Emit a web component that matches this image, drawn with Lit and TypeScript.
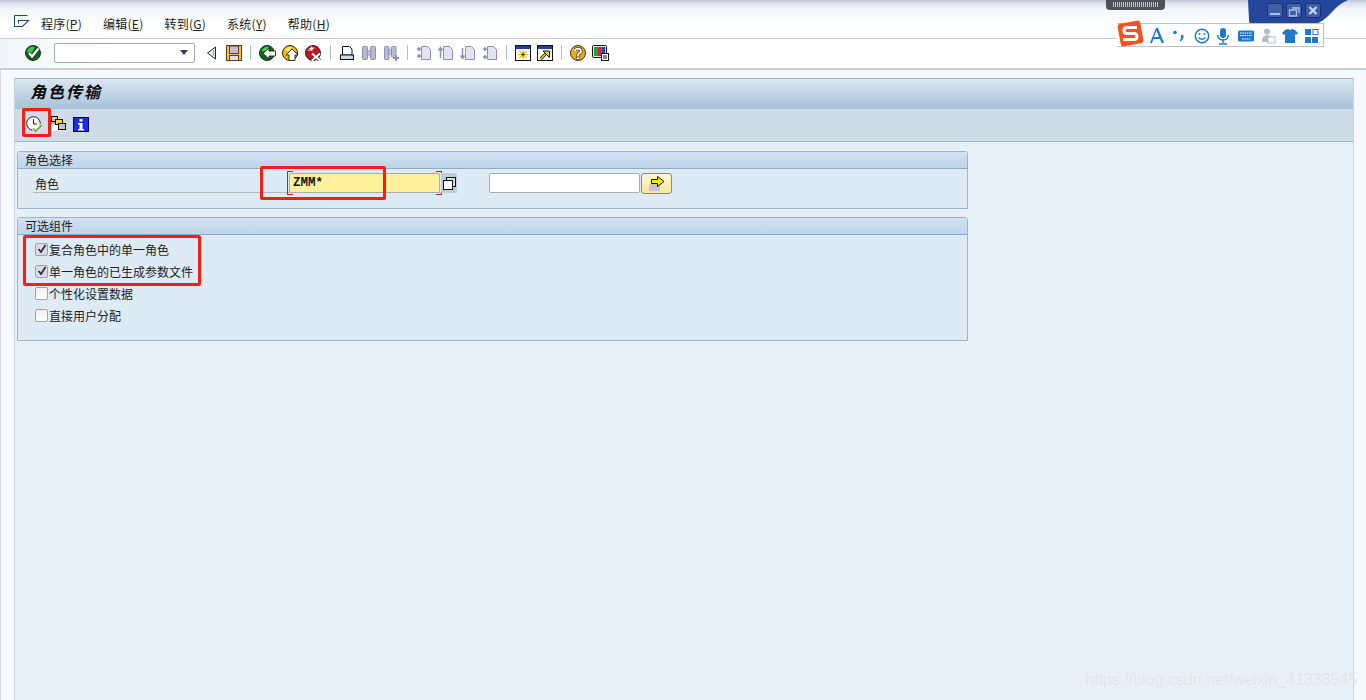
import { LitElement, html, css, svg } from "lit";
import { customElement } from "lit/decorators.js";

const ic = (w: number, h: number, body: unknown) =>
  html`<svg class="ic" width=${w} height=${h} viewBox="0 0 ${w} ${h}">${body}</svg>`;

const okIcon = ic(16, 16, svg`<circle cx="8" cy="8" r="7.5" fill="#0f5f20"/><path d="M2 7a6 6 0 0 1 8-5l-3 6z" fill="#3fc63f"/><circle cx="8" cy="8" r="7.5" fill="none" stroke="#143322"/><path d="M4 8l3 3.500 6.500-8" fill="none" stroke="#333" stroke-width="3.600"/><path d="M4 8l3 3.500 6.500-8" fill="none" stroke="#fff" stroke-width="2.200"/>`);
const backTri = ic(11, 14, svg`<path d="M9.500 1L1.500 7l8 6z" fill="#eef1f4" stroke="#222"/><path d="M7.500 4v6" stroke="#9aa3ad"/>`);
const save = ic(16, 16, svg`<rect x=".5" y=".5" width="15" height="15" fill="#f7c14a" stroke="#5a3c10"/><rect x="3.500" y="1" width="9" height="7.500" fill="#cbb8dc" stroke="#5a3c10"/><rect x="3.500" y="10.500" width="9" height="5" fill="#e6d9ee" stroke="#5a3c10"/>`);
const circArrow = (bg: string, hi: string, arrow: unknown) => ic(17, 16, svg`<circle cx="8" cy="8" r="7.500" fill=${bg} stroke="#222"/><path d="M2.500 6a6 6 0 0 1 7-4l-2 4z" fill=${hi}/>${arrow}`);
const back = circArrow("#0c6a1e", "#4fd04f", svg`<path d="M4 8.500L10 3v3h6.500v5H10v3z" fill="#fff" stroke="#222" stroke-width=".9"/>`);
const up = circArrow("#f5b800", "#fff06a", svg`<path d="M10 4l6 6h-3v5.500H7V10H4z" fill="#fff" stroke="#222" stroke-width=".9"/>`);
const cancel = circArrow("#c4141c", "#ff7a7a", svg`<path d="M7 8.500l8 7M15 8.500l-8 7" stroke="#444" stroke-width="3.600"/><path d="M7 8.500l8 7M15 8.500l-8 7" stroke="#fff" stroke-width="2"/><path d="M4.500 3.500h4M6.500 1.500v4" stroke="#fff" stroke-width="1.200"/>`);
const print = ic(16, 16, svg`<path d="M3.500 1.500h7l2.500 2.500v6h-9.500z" fill="#fff" stroke="#111"/><rect x="1.500" y="10" width="13" height="4.500" fill="#d5d8ec" stroke="#111"/>`);
const G = "#8f8fb5";
const find = ic(16, 16, svg`<rect x="1.500" y="1.500" width="5" height="13" rx="1" fill="#b9b9d2" stroke=${G}/><rect x="9.500" y="1.500" width="5" height="13" rx="1" fill="#b9b9d2" stroke=${G}/><rect x="6" y="6" width="4" height="4" fill="#c9c9dc" stroke=${G}/>`);
const findNext = ic(16, 16, svg`<rect x="1.500" y="1.500" width="4.500" height="13" rx="1" fill="#b9b9d2" stroke=${G}/><rect x="8.500" y="1.500" width="4.500" height="11" rx="1" fill="#b9b9d2" stroke=${G}/><rect x="5.500" y="5" width="3" height="4" fill="#c9c9dc" stroke=${G}/><path d="M13 10v6M10 13h6" stroke=${G} stroke-width="2"/>`);
const pg = (extra: unknown) => ic(16, 16, svg`<path d="M5.500 1.500h6l3 3v10h-9z" fill="#e3e3ef" stroke=${G}/>${extra}`);
const p1 = pg(svg`<path d="M1 4h4M3 2v4M1 11h4M3 9v4" stroke=${G} stroke-width="1.600"/>`);
const p2 = pg(svg`<path d="M2.500 13V4M.5 5.500l2-3 2 3" fill="none" stroke=${G} stroke-width="1.500"/>`);
const p3 = pg(svg`<path d="M2.500 3v9M.5 10.500l2 3 2-3" fill="none" stroke=${G} stroke-width="1.500"/>`);
const p4 = pg(svg`<path d="M1 4h4M3 2v4M1 12h4M3 10v4" stroke=${G} stroke-width="1.600"/>`);
const win1 = ic(16, 16, svg`<rect x=".5" y=".5" width="15" height="15" fill="#fff" stroke="#111"/><rect x="1" y="1" width="14" height="3" fill="#1d3f9a"/><path d="M8 5v9.500M3 9.500h10M4.500 6l7 7M11.500 6l-7 7" stroke="#e8c800" stroke-width="1.200"/><path d="M8 7.500v4M6 9.500h4" stroke="#333"/>`);
const win2 = ic(16, 16, svg`<rect x=".5" y=".5" width="15" height="15" fill="#fff" stroke="#111"/><rect x="1" y="1" width="14" height="3" fill="#1d3f9a"/><path d="M3.500 14l5-5" stroke="#111" stroke-width="3"/><path d="M3.500 14l5-5" stroke="#f0d800" stroke-width="1.400"/><path d="M6 6h6.500v6.500z" stroke="#111" fill="#f0d800"/>`);
const help = ic(16, 16, svg`<circle cx="8" cy="8" r="7.500" fill="#f0a810" stroke="#43331a"/><path d="M2 6a6 6 0 0 1 6-4v3z" fill="#ffe97c"/><path d="M5 6a3 2.500 0 1 1 4 2.500L8 10v1.500" fill="none" stroke="#333" stroke-width="3.200"/><path d="M5 6a3 2.500 0 1 1 4 2.500L8 10v1.500" fill="none" stroke="#fff" stroke-width="1.800"/><rect x="6.500" y="12" width="3" height="2.500" fill="#fff" stroke="#333" stroke-width=".6"/>`);
const layout = ic(17, 16, svg`<rect x=".5" y=".5" width="14" height="12" rx="1" fill="#e8e8e8" stroke="#111"/><rect x="2" y="2" width="4" height="9" fill="#1ea33a"/><rect x="6" y="2" width="3.500" height="9" fill="#d3202a"/><rect x="9.500" y="2" width="3.500" height="6" fill="#2040c8"/><rect x="9.500" y="8.500" width="7" height="7" fill="#fff" stroke="#111"/><path d="M11 11h4M11 13h4" stroke="#111"/>`);
const clock = ic(17, 17, svg`<circle cx="7.500" cy="7.500" r="6.800" fill="#fdfdf3" stroke="#222"/><path d="M7.500 3v5H11" fill="none" stroke="#222"/><path d="M7 12.500l2.500 3L16 9" fill="none" stroke="#fff" stroke-width="3.400"/><path d="M7 12.500l2.500 3L16 9" fill="none" stroke="#6cb53a" stroke-width="1.900"/>`);
const tree = ic(16, 16, svg`<path d="M1 15V7h4" fill="#fff" stroke="#777"/><rect x="1" y="9" width="9" height="6" fill="#fff"/><rect x="1.500" y=".5" width="6" height="5" fill="#ccc" stroke="#111"/><rect x="5.500" y="3.500" width="7" height="5" fill="#f3d63a" stroke="#111"/><rect x="8.500" y="7.500" width="7" height="6" fill="#c5c5c5" stroke="#111"/>`);
const info = ic(16, 15, svg`<rect width="16" height="15" fill="#050538"/><rect x="1" y="1" width="14" height="13" fill="#1430e8"/><rect x="6.500" y="2" width="3" height="2.500" fill="#fff"/><path d="M5 6h4.500v6H11v1.500H5V12h1.500V7.500H5z" fill="#fff"/>`);
const valueHelp = ic(13, 13, svg`<rect x="3.500" y=".5" width="9" height="9" fill="#d8dde8" stroke="#111"/><rect x=".5" y="3.500" width="9" height="9" fill="#fff" stroke="#111"/>`);
const arrowBtn = ic(18, 15, svg`<rect x="1" y="8" width="11" height="7" fill="#cdbfe0"/><path d="M3.500 3.500h6V.5L16 5.500 9.500 10.500V7.500h-6z" fill="#f8e800" stroke="#111"/>`);
const sysMenu = ic(16, 14, svg`<path d="M.5 .5h13M.5 .5v11h8l6-6H4.500v3" fill="none" stroke="#27446e" stroke-width="1.100"/>`);
const chk = svg`<svg class="tick" width="10" height="10" viewBox="0 0 10 10"><path d="M1.500 5l2.500 3 4.500-7" fill="none" stroke="#2b2b55" stroke-width="1.800"/></svg>`;

@customElement("app-root")
export class AppRoot extends LitElement {
  static styles = css`
    :host { display: block; width: 1366px; height: 700px; position: relative; overflow: hidden;
      font-family: "Noto Sans CJK SC", "Liberation Sans", sans-serif; font-size: 12px; color: #111; background: #fff; }
    .ic { display: block; flex: none; }
    .shell { display: flex; flex-direction: column; height: 700px; }
    .topbar { height: 39px; flex: none; box-sizing: border-box; padding: 13px 0 0 14px; display: flex; align-items: flex-start;
      border-top: 2px solid #c5cdd8; border-bottom: 1px solid #c3cdd8;
      background: linear-gradient(#d7dde6 0, #f4f6f9 8px, #fff 24px); }
    .menu { display: flex; gap: 21px; margin-left: 11px; margin-top: 0; line-height: 18px; color: #222; font-size: 12px; letter-spacing: .25px; }
    .menu u { text-decoration: underline; text-underline-offset: 1px; }
    .tools { height: 31px; flex: none; display: flex; align-items: center; box-sizing: border-box; padding: 0 0 2px 25px;
      border-bottom: 2px solid #c6d0dc; background: linear-gradient(90deg, #f1f5f9, #fff 120px); }
    .cmd { width: 141px; height: 20px; box-sizing: border-box; margin: 0 11px 0 13px; border: 1px solid #a8a8a8; border-radius: 2px; background: #fff;
      display: flex; align-items: center; justify-content: flex-end; padding-right: 6px; }
    .cmd i { width: 0; height: 0; border: 4px solid transparent; border-top: 5px solid #2c3f66; border-bottom: 0; }
    .tri { margin-right: 9px; }
    .tg { display: flex; gap: 6px; flex: none; }
    .sep { width: 1px; height: 15px; background: #a9c0d8; flex: none; margin: 0 8px; }
    .body { flex: 1; display: flex; padding: 8px 12px 0 14px; background: #f6f9fb; border-left: 1px solid #d3dae2; }
    .main { flex: 1; display: flex; flex-direction: column; background: #e8f0f7; border-left: 1px solid #c8d2dd; border-right: 1px solid #c8d2dd; margin-left: -1px; }
    .title { height: 31px; flex: none; box-sizing: border-box; border-top: 1px solid #9db5cb; border-bottom: 1px solid #a8bfd3;
      background: linear-gradient(#dbe6f0, #a8c3db); padding-left: 15px; font-size: 16px; font-weight: 700; font-style: italic; line-height: 25px; letter-spacing: 2px; color: #0a0a0a; }
    .apptools { height: 33px; flex: none; box-sizing: border-box; display: flex; align-items: center; gap: 7px; padding: 0 0 2px 11px;
      background: #cfdce7; border-bottom: 1px solid #a4b9cc; }
    .groups { padding: 9px 0 0 2px; display: flex; flex-direction: column; gap: 8px; }
    .group { width: 951px; box-sizing: border-box; border: 1px solid #97b5d2; border-radius: 3px 3px 0 0; background: #deeaf4; }
    .ghead { height: 17px; box-sizing: border-box; padding-left: 7px; line-height: 16px; border-bottom: 1px solid #8eabc8;
      background: linear-gradient(#d3e2f0, #bdd4e9); color: #222; }
    .gbody.a { height: 39px; position: relative; display: flex; align-items: flex-start; box-sizing: border-box; padding: 4px 0 0 17px; }
    .label { width: 254px; height: 17px; box-sizing: border-box; line-height: 16px; color: #222; margin-top: 3px; }
    .underline { width: 422px; margin-left: -1px; position: absolute; left: 16px; top: 23px; height: 1px; background: #b6b8bc; }
    .req { position: relative; width: 151px; height: 20px; box-sizing: border-box; border: 1px solid #aaa; border-radius: 2px; background: #fff09c; z-index: 1;
      font: 700 12.500px/19px "Liberation Mono", monospace; padding-left: 3px; color: #111; }
    .req::before, .req::after { content: ""; position: absolute; top: -3px; bottom: -3px; width: 5px; border: 1px solid #d01818; }
    .req::before { left: -3px; border-right: 0; }
    .req::after { right: -3px; border-left: 0; }
    .vh { width: 16px; height: 20px; box-sizing: border-box; margin-left: 1px; background: #bccbdd; border: 1px solid #c2cedc; display: flex; align-items: center; justify-content: center; z-index: 1; margin-right: 32px; }
    .inp { width: 151px; height: 20px; box-sizing: border-box; border: 1px solid #aaa; border-radius: 2px; background: #fff; z-index: 1; }
    .btn { width: 31px; height: 21px; box-sizing: border-box; margin-left: 1px; border: 1px solid #8a8a80; border-radius: 3px; background: linear-gradient(#fff8cf, #f7e79a); display: flex; align-items: center; justify-content: center; z-index: 1; }
    .gbody.b { height: 105px; box-sizing: border-box; padding: 6px 0 0 17px; display: flex; flex-direction: column; gap: 6px; }
    .row { display: flex; align-items: center; gap: 1px; height: 16px; color: #222; }
    .cb { width: 13px; height: 13px; box-sizing: border-box; border: 1px solid #a2a2a2; border-radius: 2px; background: linear-gradient(#f0f0f0, #fff); display: flex; align-items: center; justify-content: center; }
    .cb.on { background: #dcdce0; }
    .mark { position: absolute; border: 3px solid #fa1e12; border-radius: 2px; box-sizing: border-box; z-index: 3; }
    .m1 { left: 22px; top: 108px; width: 29px; height: 29px; }
    .m2 { left: 260px; top: 166px; width: 126px; height: 34px; }
    .m3 { left: 23px; top: 235px; width: 178px; height: 51px; }
    .winctl { position: absolute; left: 1248px; top: 0; width: 100px; height: 24px; z-index: 2; }
    .meter { position: absolute; left: 1106px; top: 0; width: 59px; height: 10px; background: #4e5258; border-radius: 0 0 4px 4px; z-index: 2; display: flex; justify-content: center; align-items: flex-start; padding-top: 2px; box-sizing: border-box; }
    .meter span { width: 45px; height: 5px; background: repeating-linear-gradient(90deg, #b9c8bd 0 1px, #4e5258 1px 2px); }
    .ime { position: absolute; left: 1117px; top: 23px; width: 207px; height: 24px; box-sizing: border-box; border: 1px solid #b9c1cb; border-left: 0; background: #fff; z-index: 4; }
    .logo { position: absolute; left: 0; top: -4px; width: 27px; height: 27px; z-index: 1; }
    .imeg { position: absolute; left: 0; top: 0; }
    .wm { position: absolute; left: 1085px; top: 671px; font: 16px/18px "Liberation Sans", sans-serif; color: #dde4ea; z-index: 2; text-shadow: 0 0 1px #f4f7fa; white-space: nowrap; }
  `;

  render() {
    return html`
      <div class="shell">
        <div class="topbar">
          ${sysMenu}
          <div class="menu">
            <span>程序(<u>P</u>)</span><span>编辑(<u>E</u>)</span><span>转到(<u>G</u>)</span><span>系统(<u>Y</u>)</span><span>帮助(<u>H</u>)</span>
          </div>
        </div>
        <div class="tools">
          ${okIcon}
          <div class="cmd"><i></i></div>
          <span class="tri">${backTri}</span>${save}<div class="sep"></div>
          <div class="tg">${back}${up}${cancel}</div><div class="sep"></div>
          <div class="tg">${print}${find}${findNext}</div><div class="sep"></div>
          <div class="tg">${p1}${p2}${p3}${p4}</div><div class="sep"></div>
          <div class="tg">${win1}${win2}</div><div class="sep"></div>
          <div class="tg">${help}${layout}</div>
        </div>
        <div class="body">
          <div class="main">
            <div class="title">角色传输</div>
            <div class="apptools">${clock}${tree}${info}</div>
            <div class="groups">
              <div class="group">
                <div class="ghead">角色选择</div>
                <div class="gbody a">
                  <div class="underline"></div>
                  <div class="label">角色</div>
                  <div class="req">ZMM*</div>
                  <div class="vh">${valueHelp}</div>
                  <div class="inp"></div>
                  <div class="btn">${arrowBtn}</div>
                </div>
              </div>
              <div class="group">
                <div class="ghead">可选组件</div>
                <div class="gbody b">
                  <div class="row"><span class="cb on">${chk}</span>复合角色中的单一角色</div>
                  <div class="row"><span class="cb on">${chk}</span>单一角色的已生成参数文件</div>
                  <div class="row"><span class="cb"></span>个性化设置数据</div>
                  <div class="row"><span class="cb"></span>直接用户分配</div>
                </div>
              </div>
            </div>
          </div>
        </div>
      </div>

      <div class="meter"><span></span></div>
      <svg class="winctl" width="100" height="24" viewBox="0 0 100 24">
        <path d="M0 0h100q-8 3-16 12t-16 12H4q-3 0-3-4z" fill="#23469a"/>
        <g fill="#3f5ea8" stroke="#1a2f6e"><rect x="19.500" y="3.500" width="15" height="14" rx="2"/><rect x="38.500" y="3.500" width="15" height="14" rx="2"/><rect x="57.500" y="3.500" width="15" height="14" rx="2"/></g>
        <path d="M22 14h10" stroke="#a9c2ea" stroke-width="2"/>
        <path d="M44 8h7v5M41.500 10h7v6h-7z" fill="none" stroke="#a9c2ea" stroke-width="1.300"/>
        <path d="M61.500 7l7 7M68.500 7l-7 7" stroke="#c8d8f0" stroke-width="2.200"/>
      </svg>
      <div class="ime">
        <svg class="logo" viewBox="0 0 27 27"><rect x="2" y="2" width="23" height="23" rx="3" transform="rotate(-10 13.500 13.500)" fill="#f4511e"/><path d="M20 7.500H10q-3 0-3 3t3 3h7q3 0 3 3t-3 3H6" fill="none" stroke="#fff" stroke-width="3"/></svg>
        <svg class="imeg" width="207" height="22" viewBox="0 0 207 22">
          <g fill="#1f78cf">
            <path d="M33 19l6-15h2l6 15h-2.500l-1.500-4h-6.500l-1.500 4zM37 13h5l-2.500-6.500z"/>
            <circle cx="58" cy="8.500" r="1.800"/><path d="M64 11h2.500q.5 4-3 6.500l-.8-.8q1.800-2 1.300-3.700z"/>
            <circle cx="85" cy="12" r="6.700" fill="none" stroke="#1f78cf" stroke-width="1.500"/><circle cx="82.500" cy="10" r="1"/><circle cx="87.500" cy="10" r="1"/><path d="M81.500 13.500q3.500 3.500 7 0" fill="none" stroke="#1f78cf" stroke-width="1.300"/>
            <rect x="103" y="4" width="6" height="10" rx="3"/><path d="M100.500 11q.5 5 5.500 5t5.500-5M106 16v3M102 20h8" fill="none" stroke="#1f78cf" stroke-width="1.500"/>
            <rect x="121" y="6.500" width="16" height="11" rx="1.500"/>
            <path d="M123 9h12M123 11.500h12M125 15h8" stroke="#fff" stroke-width="1.100" stroke-dasharray="1.500 .8"/>
            <path d="M168 6l3-1 2 1 2-1 3 1 3 3-2 2-1-1v9h-10v-9l-1 1-2-2z"/>
            <rect x="188" y="5" width="6" height="6"/><rect x="196" y="5.500" width="5" height="5" fill="#fff" stroke="#1f78cf"/><rect x="188" y="13" width="6" height="6"/><rect x="195" y="13" width="6" height="6"/>
          </g>
          <g fill="#b5bcc4"><circle cx="150" cy="7.500" r="3"/><path d="M145 18q0-7 5-7t5 7z"/><rect x="151" y="13" width="7" height="6" fill="#fff" stroke="#b5bcc4"/></g>
        </svg>
      </div>

      <div class="mark m1"></div>
      <div class="mark m2"></div>
      <div class="mark m3"></div>
      <div class="wm">https://blog.csdn.net/weixin_41333545</div>
    `;
  }
}
